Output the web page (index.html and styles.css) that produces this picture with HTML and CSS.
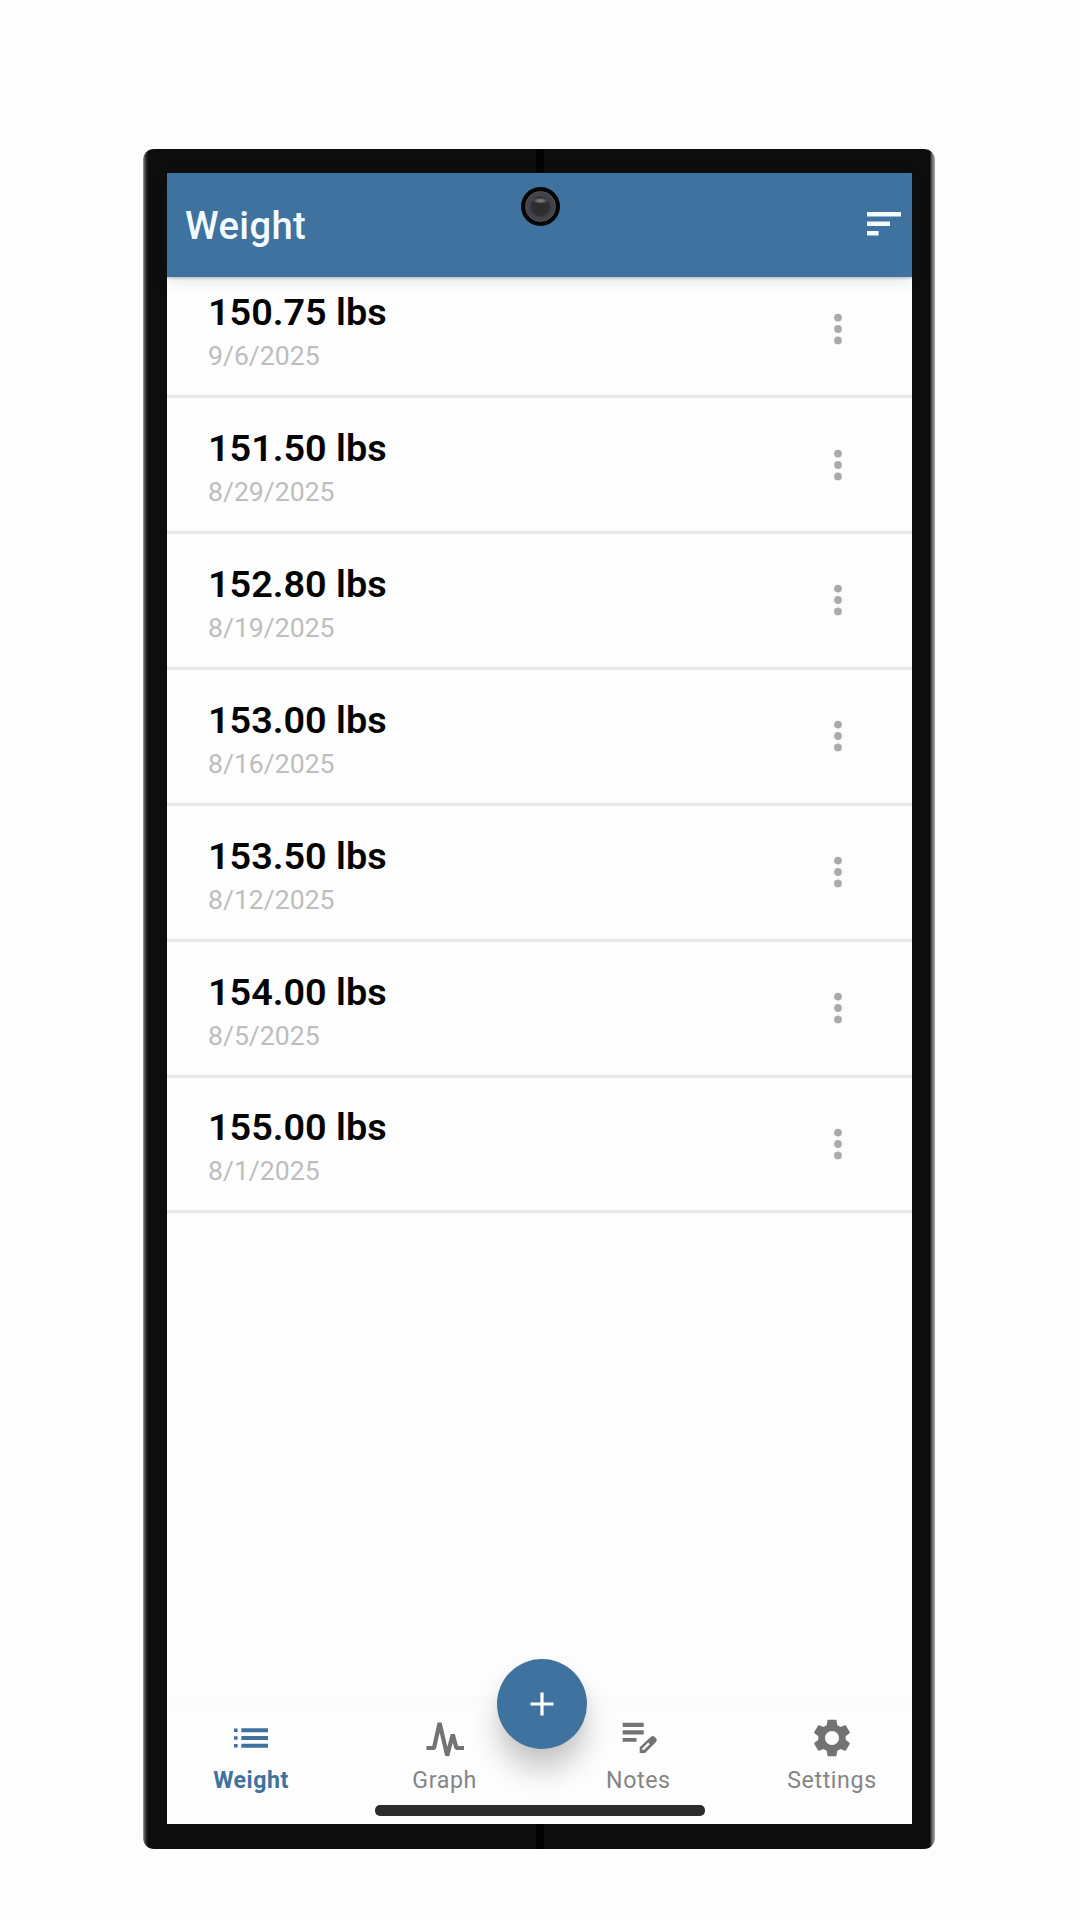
FILE: index.html
```html
<!DOCTYPE html>
<html lang="en">
<head>
<meta charset="utf-8">
<title>Weight</title>
<link rel="stylesheet" href="styles.css">
</head>
<body>
<svg class="defs" width="0" height="0">
  <symbol id="more" viewBox="0 0 8 32"><circle cx="4" cy="4.6" r="3.9"/><circle cx="4" cy="16" r="3.9"/><circle cx="4" cy="27.4" r="3.9"/></symbol>
</svg>
<div class="phone">
  <div class="screen">
    <header class="appbar">
      <h1 class="title">Weight</h1>
      <svg class="sort" width="34" height="24" viewBox="0 0 34 24"><path d="M0 0h34v4.6H0zM0 9.5h23v4.6H0zM0 19h11.6v4.6H0z"/></svg>
    </header>
    <div class="camera"><div class="lens"></div></div>
    <main class="list">
      <div class="row"><div><div class="value">150.75 lbs</div><div class="date">9/6/2025</div></div><svg class="more"><use href="#more"/></svg></div>
      <div class="row"><div><div class="value">151.50 lbs</div><div class="date">8/29/2025</div></div><svg class="more"><use href="#more"/></svg></div>
      <div class="row"><div><div class="value">152.80 lbs</div><div class="date">8/19/2025</div></div><svg class="more"><use href="#more"/></svg></div>
      <div class="row"><div><div class="value">153.00 lbs</div><div class="date">8/16/2025</div></div><svg class="more"><use href="#more"/></svg></div>
      <div class="row"><div><div class="value">153.50 lbs</div><div class="date">8/12/2025</div></div><svg class="more"><use href="#more"/></svg></div>
      <div class="row"><div><div class="value">154.00 lbs</div><div class="date">8/5/2025</div></div><svg class="more"><use href="#more"/></svg></div>
      <div class="row"><div><div class="value">155.00 lbs</div><div class="date">8/1/2025</div></div><svg class="more"><use href="#more"/></svg></div>
    </main>
    <nav class="tabs">
      <div class="tab active">
        <svg class="icon" viewBox="0 0 44 44"><path d="M5 12.5h3.6v3.6H5zM5 20.2h3.6v3.6H5zM5 27.9h3.6v3.6H5zM12.3 12.3H39v4H12.3zM12.3 20H39v4H12.3zM12.3 27.7H39v4H12.3z"/></svg>
        <span>Weight</span>
      </div>
      <div class="tab">
        <svg class="icon" viewBox="0 0 44 44"><path class="line" d="M3.5 32H11L16.6 7 24.2 39.6 29.8 18.5 33.4 32H41"/></svg>
        <span>Graph</span>
      </div>
      <div class="tab">
        <svg class="icon" viewBox="0 0 44 44"><path d="M6.7 6.8h21V11h-21zM6.7 14.3h21v4.2h-21zM6.7 22h13.8v3.7H6.7z"/><path fill-rule="evenodd" d="M23.7 31.2 35 20.8q2-1.5 3.7.2l1.5 1.6q1.4 1.7-.2 3.3L29 36.9h-5.3zM26.3 34h1.5l6-5.7-1.6-1.7-5.9 5.8z"/></svg>
        <span>Notes</span>
      </div>
      <div class="tab">
        <svg class="icon" viewBox="0 0 24 24"><path d="M19.43 12.98c.04-.32.07-.64.07-.98s-.03-.66-.07-.98l2.11-1.65c.19-.15.24-.42.12-.64l-2-3.46c-.12-.22-.39-.3-.61-.22l-2.49 1c-.52-.4-1.08-.73-1.69-.98l-.38-2.65C14.46 2.18 14.25 2 14 2h-4c-.25 0-.46.18-.49.42l-.38 2.65c-.61.25-1.17.59-1.69.98l-2.49-1c-.23-.09-.49 0-.61.22l-2 3.46c-.13.22-.07.49.12.64l2.11 1.65c-.04.32-.07.65-.07.98s.03.66.07.98l-2.11 1.65c-.19.15-.24.42-.12.64l2 3.46c.12.22.39.3.61.22l2.49-1c.52.4 1.08.73 1.69.98l.38 2.65c.03.24.24.42.49.42h4c.25 0 .46-.18.49-.42l.38-2.65c.61-.25 1.17-.59 1.69-.98l2.49 1c.23.09.49 0 .61-.22l2-3.46c.12-.22.07-.49-.12-.64l-2.11-1.65zM12 15.8c-2.1 0-3.8-1.7-3.8-3.8s1.7-3.8 3.8-3.8 3.8 1.7 3.8 3.8-1.7 3.8-3.8 3.8z"/></svg>
        <span>Settings</span>
      </div>
      <div class="fab"><svg width="24" height="24" viewBox="0 0 24 24"><path d="M10.4 .5h3.2v9.9h9.9v3.2h-9.9v9.9h-3.2v-9.9H.5v-3.2h9.9z"/></svg></div>
      <div class="home"></div>
    </nav>
  </div>
</div>
</body>
</html>
```
FILE: styles.css
```css
* { box-sizing: border-box; }

body {
  margin: 0;
  height: 1920px;
  padding: 149px 0 0 143px;
  background: #fdfdfd;
  font-family: Roboto, "Liberation Sans", sans-serif;
  overflow: hidden;
}

.defs { position: absolute; }

.phone {
  width: 792px;
  height: 1700px;
  padding: 24px 23.5px 25px;
  border-radius: 11px;
  background:
    linear-gradient(#030303, #030303) 393px 0 / 8px 100% no-repeat,
    linear-gradient(90deg, #a0a0a0 0, #444 2px, #0d0d0d 5px, #0d0d0d 787px, #6e6a6c 789px, #777 790px, #aaa 792px);
}

.screen {
  position: relative;
  display: flex;
  flex-direction: column;
  height: 1651px;
  background: #fdfdfd;
}

.appbar {
  position: relative;
  z-index: 1;
  display: flex;
  justify-content: space-between;
  flex: none;
  height: 104px;
  padding: 31px 10.5px 0 18.5px;
  background: #3f729f;
  box-shadow: 0 1px 3px rgba(0, 0, 0, .25), 0 4px 14px rgba(40, 80, 110, .12);
}

.title {
  margin: 0;
  font-size: 38.2px;
  font-weight: 500;
  line-height: 44px;
  letter-spacing: .4px;
  color: #f4fbff;
}

.sort { margin-top: 8px; fill: #f4fbff; }

.camera {
  position: absolute;
  z-index: 2;
  top: 14px;
  left: 354.5px;
  width: 39px;
  height: 39px;
  padding: 4px;
  border-radius: 50%;
  background: #050505;
}

.lens {
  height: 31px;
  border: 1px solid #55555b;
  border-radius: 50%;
  background:
    radial-gradient(ellipse 8px 3px at 50% 30%, #77777a 30%, transparent),
    radial-gradient(circle, #29292a 0, #303032 9px, #42434b 11px);
}

.list { flex: 1; margin-top: -14.5px; }

.row {
  display: flex;
  justify-content: space-between;
  height: 135.85px;
  padding: 27.8px 69.2px 0 41.5px;
  border-bottom: 3px solid #e7e7e7;
}

.value {
  font-size: 37.8px;
  font-weight: 600;
  line-height: 44px;
  color: #050505;
}

.date {
  margin-top: 6px;
  font-size: 26.6px;
  line-height: 32px;
  color: #bdbdbd;
}

.more { width: 8px; height: 32px; margin-top: 22.5px; fill: #aaa; }

.tabs {
  position: relative;
  display: flex;
  justify-content: space-between;
  flex: none;
  height: 127px;
  padding: 18.5px 24.5px 0 29.5px;
  background: linear-gradient(#fafafa, #fdfdfd 12px);
}

.tab {
  display: flex;
  flex-direction: column;
  align-items: center;
  width: 110px;
  color: #858585;
  font-size: 23.2px;
  line-height: 28px;
  letter-spacing: .6px;
}

.tab.active { color: #3f729f; font-weight: 700; letter-spacing: .5px; }

.icon { width: 44px; height: 44px; margin-bottom: 6.5px; fill: #737373; }
.active .icon { fill: #3f729f; }
.line { fill: none; stroke: #737373; stroke-width: 4.2; stroke-linejoin: bevel; }

.fab {
  position: absolute;
  top: -38.3px;
  left: 330.5px;
  display: grid;
  place-items: center;
  width: 90px;
  height: 90px;
  border-radius: 50%;
  background: #3f729f;
  fill: #fff;
  box-shadow: 0 22px 28px rgba(0, 0, 0, .2), 0 4px 12px rgba(0, 0, 0, .04);
}

.home {
  position: absolute;
  left: 208.5px;
  bottom: 8px;
  width: 329.5px;
  height: 11px;
  border-radius: 5px;
  background: #2c2c2c;
}
```
